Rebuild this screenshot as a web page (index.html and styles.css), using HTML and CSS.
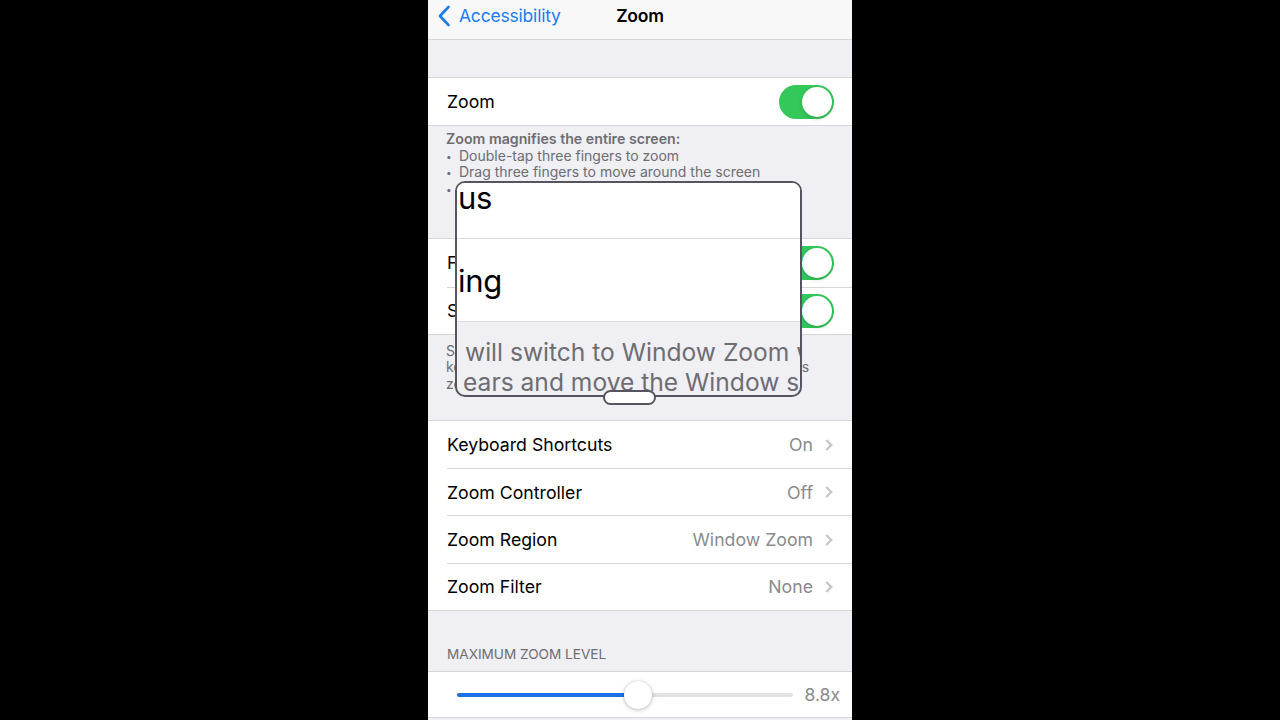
FILE: index.html
```html
<!DOCTYPE html>
<html lang="en">

<head>
    <meta charset="UTF-8">
    <meta name="viewport" content="width=device-width, initial-scale=1.0">
    <title>Zoom</title>
    <link rel="stylesheet" href="styles.css">
</head>

<body>
    <div class="phone">
        <header class="nav">
            <a class="back" href="#">
                <svg width="14" height="22" viewBox="0 0 14 22"><path d="M11.5 2 L3 11 L11.5 20" fill="none" stroke="#1b7cf2" stroke-width="2.6" stroke-linecap="round" stroke-linejoin="round"/></svg>
                Accessibility
            </a>
            <h1>Zoom</h1>
        </header>

        <div class="spacer"></div>

        <div class="group">
            <div class="row">
                <span class="label">Zoom</span>
                <span class="switch"></span>
            </div>
        </div>
        <div class="footer footer-zoom">
            <div class="footer-title">Zoom magnifies the entire screen:</div>
            <div class="bullet">Double-tap three fingers to zoom</div>
            <div class="bullet">Drag three fingers to move around the screen</div>
            <div class="bullet">Double-tap three fingers and drag to change zoom</div>
        </div>

        <div class="group">
            <div class="row">
                <span class="label">Follow Focus</span>
                <span class="switch"></span>
            </div>
            <div class="row">
                <span class="label">Smart Typing</span>
                <span class="switch"></span>
            </div>
        </div>
        <div class="footer footer-typing">
            Smart Typing will switch to Window Zoom when a<br>
            keyboard appears and move the Window so that text is<br>
            zoomed, but the keyboard is not.
        </div>

        <div class="group">
            <div class="row">
                <span class="label">Keyboard Shortcuts</span>
                <span class="value">On</span>
                <span class="chevron"></span>
            </div>
            <div class="row">
                <span class="label">Zoom Controller</span>
                <span class="value">Off</span>
                <span class="chevron"></span>
            </div>
            <div class="row">
                <span class="label">Zoom Region</span>
                <span class="value">Window Zoom</span>
                <span class="chevron"></span>
            </div>
            <div class="row">
                <span class="label">Zoom Filter</span>
                <span class="value">None</span>
                <span class="chevron"></span>
            </div>
        </div>

        <div class="section-header">MAXIMUM ZOOM LEVEL</div>
        <div class="group">
            <div class="slider-row">
                <div class="track">
                    <div class="fill" style="width: 54%"></div>
                    <div class="thumb" style="left: 54%"></div>
                </div>
                <span class="slider-value">8.8x</span>
            </div>
        </div>

        <!-- the zoom window floats over the settings list -->
        <div class="window">
            <div class="window-content">
                <div class="big-row">us</div>
                <div class="big-row">ing</div>
                <div class="big-footer">
                    <div>will switch to Window Zoom when a</div>
                    <div class="shift">ears and move the Window so that</div>
                </div>
            </div>
        </div>
        <div class="handle"></div>
    </div>
</body>

</html>
```

FILE: styles.css
```css
*{
    margin: 0;
    padding: 0;
    box-sizing: border-box;
}
:root{
    --blue:#1b7cf2;
    --green:#34c759;
    --grouped:#efeff4;
    --separator:#d6d6da;
    --footer:#6d6d72;
    --value:#8a8a8e;
    --frame:#55555f;
}
body {
    background-color: #000;
    font-family: Inter, "Noto Sans", sans-serif;
    color: #000;
}
.phone {
    position: relative;
    width: 424px;
    height: 720px;
    margin: 0 auto;
    overflow: hidden;
    background-color: var(--grouped);
}
.nav {
    height: 40px;
    background-color: #f8f8f8;
    border-bottom: 1px solid var(--separator);
    display: flex;
    align-items: center;
    position: relative;
}
.back {
    display: flex;
    align-items: center;
    gap: 8px;
    padding-left: 9px;
    color: var(--blue);
    text-decoration: none;
    font-size: 17.5px;
    letter-spacing: -0.2px;
    margin-top: -8px;
}
.nav h1 {
    position: absolute;
    left: 0;
    right: 0;
    top: 5px;
    text-align: center;
    font-size: 17.5px;
    font-weight: 600;
    letter-spacing: -0.2px;
    pointer-events: none;
}
.spacer {
    height: 37px;
}
.group {
    background-color: #fff;
    border-top: 1px solid var(--separator);
    border-bottom: 1px solid var(--separator);
}
.row {
    height: 47.3px;
    margin-left: 19px;
    padding-right: 19px;
    display: flex;
    align-items: center;
}
.row + .row {
    border-top: 1px solid var(--separator);
}
.label {
    flex: 1;
    font-size: 17.7px;
}
.value {
    font-size: 17.7px;
    color: var(--value);
}
.chevron {
    width: 8px;
    height: 8px;
    margin-left: 10px;
    margin-right: 2px;
    border-top: 2px solid #c4c4c8;
    border-right: 2px solid #c4c4c8;
    transform: rotate(45deg);
}
.switch {
    position: relative;
    width: 55px;
    height: 34px;
    margin-right: -1px;
    border-radius: 17px;
    background-color: var(--green);
}
.switch::after {
    content: "";
    position: absolute;
    top: 2px;
    right: 2px;
    width: 30px;
    height: 30px;
    border-radius: 50%;
    background-color: #fff;
    box-shadow: 0 2px 4px rgba(0,0,0,0.15);
}
.footer {
    padding: 5px 19px 0 18px;
    font-size: 14px;
    line-height: 16.6px;
    color: var(--footer);
    white-space: nowrap;
}
.footer-zoom {
    height: 112px;
}
.footer-typing {
    height: 85px;
    padding-top: 8px;
}
.footer-title {
    font-weight: 600;
    font-size: 14.2px;
}
.bullet {
    padding-left: 13px;
    position: relative;
}
.bullet::before {
    content: "\2022";
    position: absolute;
    left: 0;
    font-size: 10px;
}
.section-header {
    height: 60px;
    padding: 35px 19px 0;
    font-size: 13.6px;
    color: var(--footer);
}
.slider-row {
    height: 45px;
    display: flex;
    align-items: center;
    padding: 0 12px 0 29px;
    gap: 12px;
}
.track {
    position: relative;
    flex: 1;
    height: 4px;
    border-radius: 2px;
    background-color: #e3e3e6;
}
.fill {
    height: 4px;
    border-radius: 2px;
    background-color: #1a72e6;
}
.thumb {
    position: absolute;
    top: -12px;
    width: 28px;
    height: 28px;
    margin-left: -14px;
    border-radius: 50%;
    background-color: #fff;
    box-shadow: 0 1px 4px rgba(0,0,0,0.25), 0 0 1px rgba(0,0,0,0.2);
}
.slider-value {
    font-size: 17.5px;
    color: var(--value);
}
.window {
    position: absolute;
    left: 27px;
    top: 181px;
    width: 347px;
    height: 216px;
    border: 2px solid var(--frame);
    border-radius: 10px;
    overflow: hidden;
    background-color: var(--grouped);
}
.window-content {
    margin-top: -27px;
}
.big-row {
    height: 83px;
    background-color: #fff;
    border-bottom: 1.5px solid #dcdce0;
    display: flex;
    align-items: center;
    padding-left: 1px;
    font-size: 31px;
    letter-spacing: -0.3px;
}
.big-footer {
    padding: 15px 0 0 8px;
    font-size: 24.6px;
    line-height: 30px;
    color: var(--footer);
    white-space: nowrap;
}
.shift {
    margin-left: -2px;
}
.handle {
    position: absolute;
    left: 175px;
    top: 390px;
    width: 53px;
    height: 15px;
    border: 2px solid var(--frame);
    border-radius: 8px;
    background-color: #fff;
}
```
